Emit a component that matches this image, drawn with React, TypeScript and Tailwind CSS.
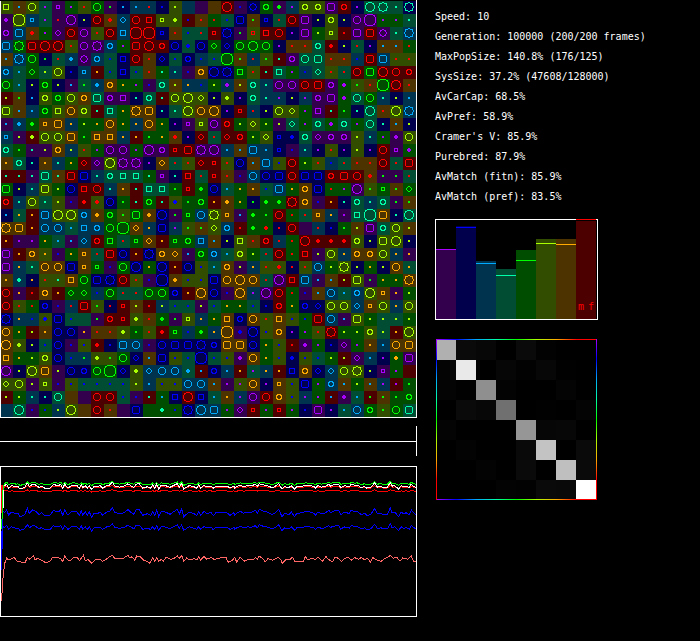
import React from "react";

const BRIGHT: Record<string, string> = {
  p: "#aa00ff",
  b: "#0000ff",
  a: "#00aaff",
  t: "#00ffaa",
  g: "#00ff00",
  l: "#aaff00",
  o: "#ffaa00",
  r: "#ff0000",
};

const DARK: Record<string, string> = {
  p: "#33004d",
  b: "#00004d",
  a: "#00334d",
  t: "#004d33",
  g: "#004d00",
  l: "#334d00",
  o: "#4d3300",
  r: "#4d0000",
};

const HUES = ["p", "b", "a", "t", "g", "l", "o", "r"];

// One quadrant of each marker, as pixels counted outward from the cell centre.
const QUADRANTS: Record<string, number[][]> = {
  ".": [[0, 0]],
  "+": [[0, 0], [1, 0], [0, 1]],
  s: [[1, 0], [1, 1], [0, 1]],
  S: [[2, 0], [2, 1], [2, 2], [1, 2], [0, 2]],
  d: [[2, 0], [1, 1], [0, 2]],
  o: [[2, 0], [2, 1], [1, 1], [1, 2], [0, 2]],
  D: [[3, 0], [2, 1], [2, 2], [1, 2], [0, 3]],
  O: [[3, 0], [3, 1], [2, 2], [1, 3], [0, 3]],
  Q: [[3, 0], [3, 1], [3, 2], [2, 3], [1, 3], [0, 3]],
  "*": [[4, 0], [3, 1], [3, 2], [3, 3], [2, 3], [1, 3], [0, 4]],
  C: [[4, 0], [4, 1], [3, 2], [3, 3], [2, 3], [1, 4], [0, 4]],
  B: [[5, 0], [5, 1], [5, 2], [4, 3], [4, 4], [3, 4], [2, 5], [1, 5], [0, 5]],
};

// Each cell: background hue, marker hue, marker shape.
const ROWS = [
  "llS oa. llO tp. pps gp. lr. ggO pg. ba. aa. ar. bb. ll. a-- p-- o-- rrC pb. bbD ggo pg+ ap. llo llo ppQ rro bp. ttC tt* tt. bt*",
  "pp+ llB aas tp. pr. ppC bl. rrO or+ aad rrO rrS lls ll+ rb. or. gr. tb. bbQ og. bbs tr. rrO ppQ bl. llo bl. ppO ppB gp. gp. tt.",
  "ppo aaQ or+ gp. ppd rrO ppO lr. rrO aaS rrB rrB bbs or. tb. tr. rrs bb* pg. lrs rrS rrO bp. ppQ gl. lls rr. ppQ rrQ ppD tt. aa*",
  "aaQ gg* rrQ rrC rrC lr. ppO pp* aao gp. rrQ rrC rro bbO tb+ bbO ggd bbd ggO ggC ggO bp. or. or. tto rr+ bl. tr. bp. oa. oa. gr.",
  "oa. aa* ggO bg. tr. aa+ ppD aao tb. bbS rrO or. bbd tb. bbo ab. tb. ggB og. ar. lg. rt. ppo ttO ttQ or. or. ab. rrQ aaQ lr. lr.",
  "aao ta. ggd tl. llO bb. aas ro. tb. bbS tb. or. gt. at. pb. ooo bbC bb* ggS lr. rt. ttS gp. ab. ttd lr. tr. rrO ggQ rrC rrO rro",
  "ggO ta. bl. ggo bl. pa. tg. aa+ ooo go. gp. pb. tto ol. ao. ab. gl. ap+ ol. tto at. ppO ppO rrO rrQ ppo gp+ lg. or. ggB rrC or.",
  "rl. og. ba. llo ggo llO ooo ttQ ppo ppS bt. tto rt. llO llC lld bl. ll+ bp. tto at. ap. bl. ap. ppo ppQ gp+ ttO ggO at. bl. aa.",
  "llQ oa. aa. ggo llS ooO llo rt. ttS go. oo* ooQ bt. tt. llC ooO ooC bp. rrs ar. bl. llO lld gp. ppS rt. gg. bt. ttC or. llC aa*",
  "pa. aa+ gg+ oos ooQ ao. gl. go. ooO go. ao. ooO go. bp. pps lls ppO rro gl. lld gl. pl. ttd gp. tto gp+ tto gp. ttO bt. oa. bl.",
  "aas pl. rl+ llO llO ooQ gg. ooS ooS ao. ro. gg. go. or+ bp. rrd tr. rrd rro gl. lld bbs bb+ tto ppd ppo ppo ll. at. gp. pp+ llO",
  "tto gg. pt. pl. ooo al. lr. gp. ppO ppO gp. ppC ppo rrs rrQ pp* ppC aa. oa. aaQ aa. bbs pb. at. bp. lr. bp. ll. bp. rrO pps gp+",
  "oo. tto bt. oo. at. go. rrd ppd llC pp* pp* bp. ood tr. lr. rrd rrs lr. bbO oa. aaQ lb. rrO gl. lr. ab. tr. or. or. rrO tr. rrQ",
  "rt. rt. pt. ttQ ot. rrQ bbQ at. tto ttS ttS gt. pps bt. rrS tr. rrs or. pb. aaO bbO bbQ rrO bbQ bbQ rro rrQ rrO or+ pg. pg. tr.",
  "ggQ bl. at. llQ gl. bbO rrS rrO at. oo. rt. ttS ttS gg. rrs gg+ bbO ta. go. oo. tb. aaQ go. ooo bbQ gr. gp. ppC lg. ggs og. ggd",
  "rro at. llO tt. ll. pb. rr+ lr+ bbO gg. rt. ggo rt. lb+ gg. ggo ro. oo+ go. bg. gg+ gg+ rr* ooo pb. ro. bt. tto at. tto pg. og.",
  "ba. to. ro. aaQ llC llC aao oo+ ggo lg. ggQ oo+ bbC pg. ggs aaO ll* oos pa. gg+ gg. rrO gr. tr. oos ao. pp. ttS ttB ooQ bt. ttC",
  "oo* ooQ ro. aaO aaO ta. aaS aao ggO ggB ood ao. bbQ ap. lg. og. lld aao rr. gg+ gr+ br. rrO p-- ar. bb. gg. ol. ppQ tto llO ol.",
  "ro. pp. pp. go. ta. pa. aad rro ggS tr. ggs ood ro. ggs ggo aaS oa. bl. llS or. rro ar. gr. rrC rr+ rr+ rr+ llo bl. llQ llC bl.",
  "ppQ ro. ooo lo. pb. go. oos tr. rrQ bbO ro. bb* ooo ood pa. ggo aao ta. llo gl. tr. rrO gr. rrS pl. llO ao. ooo ooo llO ao. po.",
  "ppQ ao. tt. ooO ooO bbQ oos ggs pb. ggO bbC go. bbC ro. bbO lb. ta. ooo pl. ao. lr. lr+ br. lr. aaO gl. ll* bl. go. bl. ooO to.",
  "oo. at+ bo. lr. lt. ooS ggO bbQ bb* rrO lr. pb. bbB oo+ lb. lb. bbQ ooO ooC ooO tr. ppC rrS aaQ pa. oa. rl. llQ pg. go. go. oo*",
  "rrO po. rr. ooo ro. ggd ggd ab. ggO tr. tr. ggO ggO bbo ro. ooC bbO pb. ooC ap. ppC rrO gr. pb. oa. aaO ta. aao llC oos po. gl.",
  "rrO lr. gr. bbo pb. ar. rrQ lg. br. rrs ol. rr. al. tb. tb. pl. tb. go. go. tb. bb. rro go. bbo bbd llO llO aad oos llO ao. llO",
  "bb* ao. ab. lb+ bbQ tb. t-- pg. rro rrs ll+ or. gg+ pg. lls ao. go. ooS bbo ooO lr. ooS lb. gb. rrQ aaO pa. llQ gl. tl. tl. gl.",
  "ooO go. rl. oo. bbO bbO po. or. or. ll+ gg. lr. rr+ ggs ab. gg+ ao. ooB pb+ bbC lb. ooo bp. gp. lr. rr* gl. gl. llo tl. ro. llC",
  "ooC ll+ bl. tb. bbO pb. lb. rr+ bb. aaQ aaO pb. bbO bbQ bbQ bb* bbo ooQ ooQ bbO go. lb. rr. pp+ gp. bb. ppd gp. oo. aa. ooO ooQ",
  "ooS go. gl. llo bbO ab. ag. ll+ lg. ggO bbd oa. bbQ lb. tb. bbB tb. lb. pp+ ooO go. lb. bb+ lb. tb. gl. rl. ppd aa. bp. go+ ppQ",
  "ppC bl. llC ooQ pl. bbO bbo ggO ggB bbd ll+ aad aaO aaO ta+ ra. bbo aa. ro. tp. ao. ro. bbS ooo bbd aad llO ll* bl. pps gp. r--",
  "lld llO pl. lls pb. lb. tb. tb. tb. tb. ll. aa. lb. lb. aaO aaO oa. pp. lp. ooO bp. oos lb. bbQ gp. aao oa. gl. oa. ap. rp. gg.",
  "rl. gl. at. bt. ttO o-- p-- rrO rrO tb. pb. rt. ga. bbS rrC bbS ta. oo. ap. ppO rrO ooo lb. ap. gp. ra. pp+ ta. rg. og. gg. ggo",
  "a-- ttC pb. gb. al. llC o-- rrO or. p-- bbQ g-- gt+ gb. bb* aaC aaQ gp. ppd rrs gp. rrs gp. bb. ppQ bp. ta. aaO ggo lg. ggO ttQ",
];

const CELL = 13;

function markerPath(shape: string, cx: number, cy: number) {
  const quadrant = QUADRANTS[shape] ?? [];
  return quadrant
    .flatMap(([x, y]) => [
      [x, y],
      [-1 - x, y],
      [x, -1 - y],
      [-1 - x, -1 - y],
    ])
    .map(([x, y]) => `M${cx + x} ${cy + y}h1v1h-1z`)
    .join("");
}

function Population() {
  return (
    <svg width="417" height="418" shapeRendering="crispEdges" role="img" aria-label="Population">
      {ROWS.map((row, r) =>
        row.split(" ").map((cell, c) => {
          const x = c * CELL;
          const y = 1 + r * CELL;
          return (
            <g key={`${r}-${c}`}>
              <rect x={x} y={y} width={CELL} height={CELL} fill={DARK[cell[0]]} />
              <path d={markerPath(cell[2], x + 6, y + 6)} fill={BRIGHT[cell[1]]} />
            </g>
          );
        })
      )}
      <path d="M0 1h1v417h-1zM0 417h417v1h-417zM416 0h1v418h-1z" fill="#fff" />
    </svg>
  );
}

function Timeline() {
  return (
    <svg width="417" height="30" shapeRendering="crispEdges" role="img" aria-label="Timeline">
      <path d="M0 15h417v1h-417zM416 0h1v30h-1z" fill="#fff" />
    </svg>
  );
}

// Samples are in thirds of a pixel.
const MATCH =
  "14:277,20:270,26:286,34:276,48:282,54:280,60:290,74:284,82:265,88:280,98:270,106:273,118:284,124:278,134:286,150:286,160:272,176:276,182:270,188:286,194:270,204:286,216:274,230:275,238:286,244:272,248:284,256:276,262:286,268:276,275:292,282:280,294:280,300:276,308:286,320:276,328:275,337:263,344:277,358:282,372:278,384:269,394:278,402:283,408:270,418:269,428:286,442:281,452:286,458:274,464:286,470:270,476:290,484:274,498:277,510:283,520:276,532:268,538:282,545:267,551:290,560:282,568:276,582:281,590:286,596:274,602:286,612:274,618:280,634:278,640:287,648:278,674:278,682:279,690:286,702:278,704:286,710:280,722:274,730:280,742:276,754:277,766:271,772:280,778:268,786:272,800:276,816:284,824:280,836:268,846:290,854:280,866:284,874:276,884:290,890:280,908:278,918:274,930:276,942:280,946:286,954:276,964:282,974:280,986:271,992:278,998:274,1016:270,1022:284,1034:276,1048:281,1054:270,1064:275,1072:274,1084:284,1094:280,1100:286,1112:284,1124:265,1132:282,1144:280,1150:284,1162:284,1171:263,1176:278,1184:276,1196:290,1204:276,1212:282,1218:278,1228:284,1234:270,1240:278,1248:284";

const PREF =
  "5:543,7:500,10:465,14:430,20:415,26:420,34:416,42:412,52:424,66:427,76:427,82:412,88:418,100:407,106:420,112:415,122:419,138:429,150:424,158:412,170:412,182:416,188:424,194:407,202:419,212:422,220:412,232:412,238:422,250:406,256:422,264:418,270:425,276:430,288:418,300:418,308:424,320:417,328:410,337:406,344:415,372:414,383:406,390:414,396:410,404:420,410:408,420:409,430:420,442:424,450:430,458:412,464:424,470:412,476:424,484:418,490:424,498:412,512:418,522:415,532:408,538:415,545:407,551:424,560:414,570:420,582:416,590:420,596:410,602:420,612:410,620:418,634:412,644:420,652:415,666:413,678:412,684:427,698:420,704:412,710:427,720:412,734:424,744:419,760:420,766:412,772:418,778:408,788:416,796:425,804:416,818:421,834:412,842:418,847:430,856:420,870:418,878:411,884:424,910:425,916:410,924:420,936:414,946:420,954:412,968:424,978:409,984:418,998:425,1004:412,1016:415,1024:425,1032:417,1044:411,1054:421,1064:413,1076:418,1084:412,1092:418,1104:416,1111:427,1118:412,1128:419,1144:424,1154:415,1164:412,1171:406,1180:415,1190:412,1200:424,1208:414,1224:418,1234:408,1240:423,1248:425";

function parse(samples: string) {
  return samples.split(",").map((s) => s.split(":").map(Number));
}

function derive(base: number, gain: number, lead: number[][]) {
  return [...lead, ...parse(MATCH).map(([x, y]) => [x, base + (y - 279) * gain])];
}

const SERIES = [
  { color: "#ff6666", data: parse(PREF) },
  { color: "#0000ff", data: derive(279, 1, [[5, 450], [5, 360], [8, 275]]) },
  { color: "#0000ff", data: derive(323, 0.75, [[5, 450], [7, 330], [10, 320]]) },
  { color: "#ff0000", data: derive(213, 0.25, [[5, 280], [6, 196], [10, 214]]) },
  { color: "#ff0000", data: derive(202, 0.4, [[5, 280], [7, 210], [12, 200]]) },
  { color: "#ffffff", data: derive(199, 0.75, [[8, 274], [11, 240], [12, 196]]) },
  { color: "#00ff00", data: derive(191, 0.45, [[5, 328], [7, 270], [8, 215], [13, 190]]) },
];

function History() {
  return (
    <svg width="417" height="151" shapeRendering="crispEdges" role="img" aria-label="History">
      {SERIES.map((s, i) => (
        <polyline
          key={i}
          fill="none"
          stroke={s.color}
          points={s.data.map(([x, y]) => `${(x / 3).toFixed(1)},${(y / 3 - 46).toFixed(1)}`).join(" ")}
        />
      ))}
      <rect x="0.5" y="0.5" width="416" height="150" fill="none" stroke="#fff" />
    </svg>
  );
}

// Bar top and marker line, measured down from the frame's top edge.
const BARS = [
  [30, 30],
  [7, 8],
  [42, 44],
  [50, 56],
  [31, 41],
  [20, 24],
  [20, 25],
  [2, 0],
];

function BarChart() {
  return (
    <svg className="mt-3 block" width="163" height="101" shapeRendering="crispEdges" role="img" aria-label="Fitness by type">
      <rect x="0.5" y="0.5" width="162" height="100" fill="none" stroke="#fff" />
      {BARS.map(([top, mark], i) => (
        <g key={i}>
          <rect x={1 + i * 20} y={top} width="20" height={100 - top} fill={DARK[HUES[i]]} />
          <rect x={1 + i * 20} y={mark} width="20" height="1" fill={BRIGHT[HUES[i]]} />
        </g>
      ))}
      <text x="143" y="91" fill="#ff0000" className="font-['DejaVu_Sans_Mono',monospace] text-[10px]">
        m
      </text>
      <text x="153" y="91" fill="#ff0000" className="font-['DejaVu_Sans_Mono',monospace] text-[10px]">
        f
      </text>
    </svg>
  );
}

const MATRIX = [
  [176, 10, 7, 0, 10, 2, 0, 0],
  [4, 233, 0, 6, 2, 7, 1, 0],
  [4, 1, 143, 3, 0, 0, 4, 0],
  [0, 10, 7, 112, 0, 1, 0, 4],
  [4, 0, 0, 0, 150, 6, 7, 0],
  [0, 3, 0, 0, 9, 195, 0, 10],
  [0, 0, 3, 0, 10, 0, 191, 10],
  [0, 0, 0, 3, 2, 10, 9, 255],
];

function MatrixChart() {
  const stops = HUES.map((h, i) => <stop key={h} offset={i / 8} stopColor={BRIGHT[h]} />);
  return (
    <svg className="ml-px mt-[19px] block" width="161" height="161" shapeRendering="crispEdges" role="img" aria-label="Match matrix">
      <defs>
        <linearGradient id="across" gradientUnits="userSpaceOnUse" x1="0" y1="0" x2="161" y2="0">
          {stops}
        </linearGradient>
        <linearGradient id="down" gradientUnits="userSpaceOnUse" x1="0" y1="0" x2="0" y2="161">
          {stops}
        </linearGradient>
      </defs>
      {MATRIX.map((row, r) =>
        row.map((v, c) => (
          <rect key={`${r}-${c}`} x={c * 20} y={1 + r * 20} width="20" height="20" fill={`rgb(${v},${v},${v})`} />
        ))
      )}
      <path d="M0 0h161v1h-161zM0 160h161v1h-161z" fill="url(#across)" />
      <path d="M0 0h1v161h-1zM160 0h1v161h-1z" fill="url(#down)" />
    </svg>
  );
}

const STATS = [
  "Speed: 10",
  "Generation: 100000 (200/200 frames)",
  "MaxPopSize: 140.8% (176/125)",
  "SysSize: 37.2% (47608/128000)",
  "AvCarCap: 68.5%",
  "AvPref: 58.9%",
  "Cramer's V: 85.9%",
  "Purebred: 87.9%",
  "AvMatch (fitn): 85.9%",
  "AvMatch (pref): 83.5%",
];

export default function App() {
  return (
    <main className="flex min-h-screen items-start gap-[18px] bg-black font-['DejaVu_Sans_Mono',monospace] text-white">
      <section className="flex shrink-0 flex-col">
        <Population />
        <div className="flex flex-col gap-2.5 pt-2">
          <Timeline />
          <History />
        </div>
      </section>
      <section className="min-w-0 flex-1 pt-[7px]">
        <ul className="text-[10px] leading-5">
          {STATS.map((s) => (
            <li key={s}>{s}</li>
          ))}
        </ul>
        <BarChart />
        <MatrixChart />
      </section>
    </main>
  );
}
